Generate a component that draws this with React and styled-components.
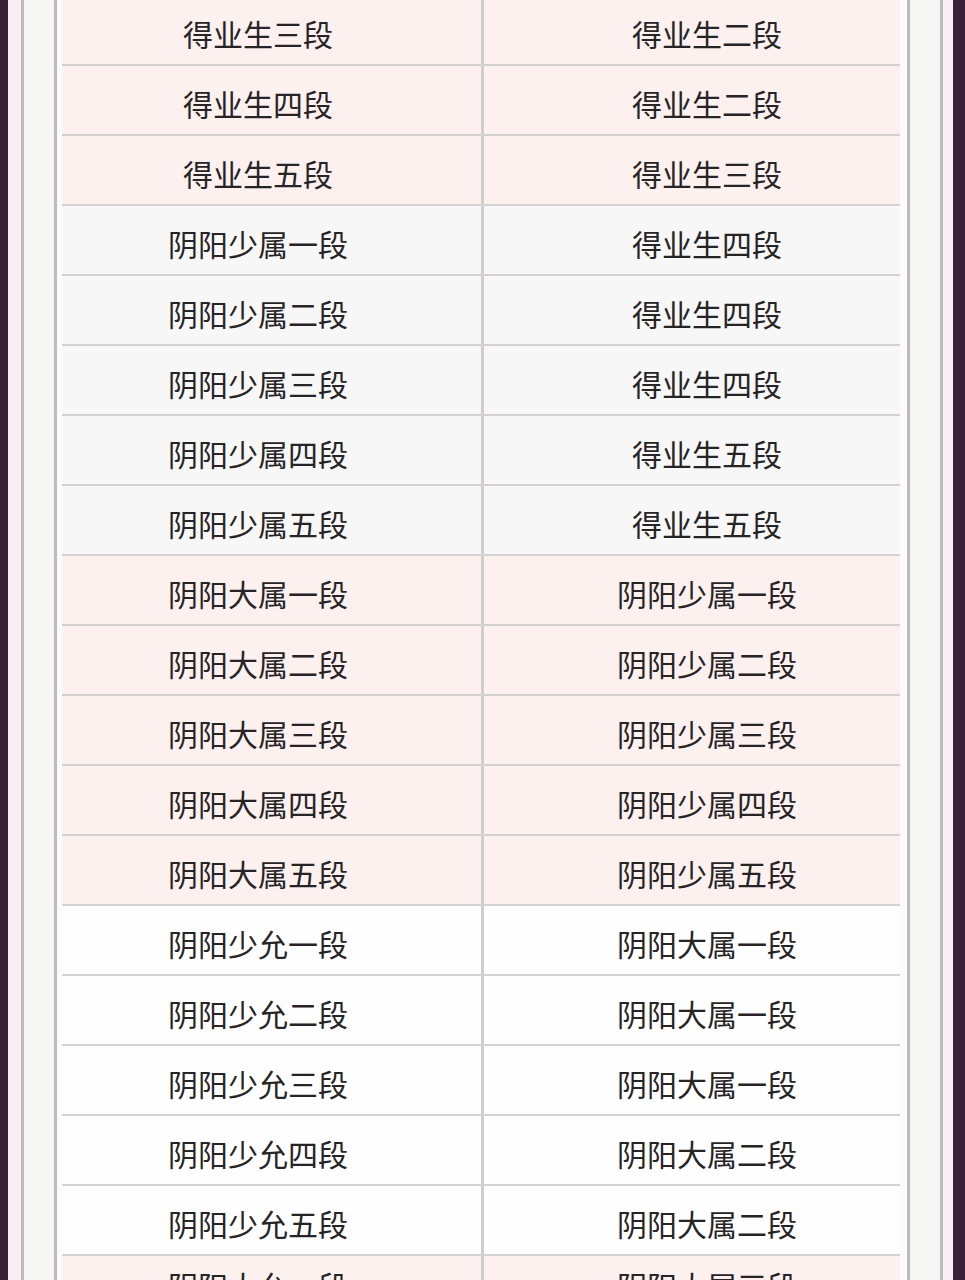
import styled, { createGlobalStyle } from 'styled-components'

const GlobalStyle = createGlobalStyle`
  html, body {
    margin: 0;
    padding: 0;
    background: #f7f6f4;
    overflow: hidden;
  }
  body {
    font-family: "Noto Sans CJK SC", "Noto Sans", sans-serif;
  }
`

const Frame = styled.div`
  display: flex;
  height: 1280px;
  width: 965px;
  overflow: hidden;
`

const Edge = styled.div`
  flex: none;
  width: ${p => p.$w}px;
  background: ${p => p.$c};
`

const Table = styled.div`
  flex: none;
  width: 838px;
  margin-top: -4px;
  display: flex;
  flex-direction: column;
`

const Row = styled.div`
  flex: none;
  display: flex;
  height: 68px;
  border-bottom: 2px solid #d3d1d1;
  background: ${p => p.$bg};
`

const Cell = styled.div`
  display: flex;
  align-items: ${p => (p.$top ? 'flex-start' : 'center')};
  justify-content: center;
  box-sizing: border-box;
  padding-top: ${p => (p.$top ? '8px' : '6px')};
  font-size: 30px;
  line-height: 42px;
  color: #262425;
  ${p => p.$left
    ? 'width: 422px; padding-right: 27px; border-right: 3px solid #cfcdcd;'
    : 'width: 416px; padding-left: 30px;'}
`

const PINK = '#fdf1f0'
const GRAY = '#f7f7f7'
const WHITE = '#fefefe'

const rows = [
  ['得业生三段', '得业生二段', PINK],
  ['得业生四段', '得业生二段', PINK],
  ['得业生五段', '得业生三段', PINK],
  ['阴阳少属一段', '得业生四段', GRAY],
  ['阴阳少属二段', '得业生四段', GRAY],
  ['阴阳少属三段', '得业生四段', GRAY],
  ['阴阳少属四段', '得业生五段', GRAY],
  ['阴阳少属五段', '得业生五段', GRAY],
  ['阴阳大属一段', '阴阳少属一段', PINK],
  ['阴阳大属二段', '阴阳少属二段', PINK],
  ['阴阳大属三段', '阴阳少属三段', PINK],
  ['阴阳大属四段', '阴阳少属四段', PINK],
  ['阴阳大属五段', '阴阳少属五段', PINK],
  ['阴阳少允一段', '阴阳大属一段', WHITE],
  ['阴阳少允二段', '阴阳大属一段', WHITE],
  ['阴阳少允三段', '阴阳大属一段', WHITE],
  ['阴阳少允四段', '阴阳大属二段', WHITE],
  ['阴阳少允五段', '阴阳大属二段', WHITE],
  ['阴阳大允一段', '阴阳大属三段', PINK],
]

export default function App() {
  return (
    <>
      <GlobalStyle />
      <Frame>
        <Edge $w={8} $c="#3b1f37" />
        <Edge $w={13} $c="#fbeef4" />
        <Edge $w={3} $c="#bdbbbb" />
        <Edge $w={30} $c="#f6f7f5" />
        <Edge $w={3} $c="#bdbbbb" />
        <Edge $w={5} $c="#fcfbfb" />
        <Table>
          {rows.map(([a, b, bg], i) => {
            const last = i === rows.length - 1
            return (
              <Row key={i} $bg={bg}>
                <Cell $left $top={last}>{a}</Cell>
                <Cell $top={last}>{b}</Cell>
              </Row>
            )
          })}
        </Table>
        <Edge $w={7} $c="#fcfbfb" />
        <Edge $w={3} $c="#bdbbbb" />
        <Edge $w={30} $c="#f6f7f5" />
        <Edge $w={3} $c="#bdbbbb" />
        <Edge $w={10} $c="#fbeef4" />
        <Edge $w={12} $c="#3b1f37" />
      </Frame>
    </>
  )
}
